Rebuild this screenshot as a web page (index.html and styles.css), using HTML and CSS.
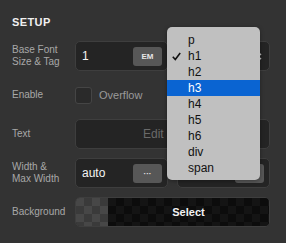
FILE: index.html
```html
<!DOCTYPE html>
<html>
	<head>
		<title>Setup panel</title>
		<link rel="stylesheet" href="styles.css">
	</head>
	<body>
		<div class="panel">
			<div class="title">SETUP</div>
			<div class="row">
				<div class="label">Base Font<br>Size &amp; Tag</div>
				<div class="split">
					<div class="box">
						<span class="val">1</span>
						<span class="btn">EM</span>
					</div>
					<div class="box select">
						<svg class="arrows" width="7" height="11" viewBox="0 0 7 11">
							<path d="M1 4 L3.5 1.5 L6 4 M1 7 L3.5 9.5 L6 7" fill="none" stroke="#bbb" stroke-width="1.4"/>
						</svg>
					</div>
				</div>
			</div>
			<div class="row">
				<div class="label">Enable</div>
				<div class="check-line">
					<span class="check"></span>
					<span class="check-text">Overflow</span>
				</div>
			</div>
			<div class="row">
				<div class="label">Text</div>
				<div class="box wide">
					<span class="edit">Edit</span>
				</div>
			</div>
			<div class="row">
				<div class="label">Width &amp;<br>Max Width</div>
				<div class="split">
					<div class="box">
						<span class="val">auto</span>
						<span class="btn">&middot;&middot;&middot;</span>
					</div>
					<div class="box end">
						<span class="btn">&middot;&middot;&middot;</span>
					</div>
				</div>
			</div>
			<div class="row">
				<div class="label">Background</div>
				<div class="box bg">
					<span class="swatch"></span>
					<span class="pick">Select</span>
				</div>
			</div>
		</div>
		<div class="menu">
			<div class="item">p</div>
			<div class="item">
				<svg class="tick" width="9" height="9" viewBox="0 0 9 9">
					<path d="M0.8 4.8 L3.3 7.6 L8.2 1" fill="none" stroke="#111" stroke-width="1.6"/>
				</svg>h1</div>
			<div class="item">h2</div>
			<div class="item active">h3</div>
			<div class="item">h4</div>
			<div class="item">h5</div>
			<div class="item">h6</div>
			<div class="item">div</div>
			<div class="item">span</div>
		</div>
	</body>
</html>
```

FILE: styles.css
```css
body {
	margin: 0;
	background: #333333;
	font-family: "Liberation Sans", Arial, sans-serif;
	width: 286px;
	height: 243px;
	overflow: hidden;
	position: relative;
}
.panel {
	padding: 15px 16px 0 12px;
}
.title {
	color: #f0f0f0;
	font-size: 11px;
	font-weight: bold;
	letter-spacing: 0.4px;
	line-height: 14px;
	margin-bottom: 12px;
}
.row {
	display: grid;
	grid-template-columns: 63px 1fr;
	align-items: center;
	height: 30px;
	margin-bottom: 9px;
}
.label {
	color: #a8a8a8;
	font-size: 10px;
	line-height: 12px;
}
.split {
	display: grid;
	grid-template-columns: 1fr 1fr;
	gap: 9px;
}
.box {
	box-sizing: border-box;
	height: 30px;
	background: #242424;
	border: 1px solid #3e3e3e;
	border-radius: 5px;
	display: flex;
	align-items: center;
	justify-content: space-between;
	padding: 0 5px 0 6px;
}
.box.end,
.box.select {
	justify-content: flex-end;
}
.val {
	color: #f4f4f4;
	font-size: 12px;
}
.btn {
	width: 29px;
	height: 19px;
	border-radius: 3px;
	background: #575757;
	color: #e6e6e6;
	font-size: 8px;
	font-weight: bold;
	display: flex;
	align-items: center;
	justify-content: center;
}
.select .arrows {
	margin-right: 2px;
}
.check-line {
	display: flex;
	align-items: center;
	gap: 7px;
}
.check {
	box-sizing: border-box;
	width: 17px;
	height: 17px;
	background: #2a2a2a;
	border: 1px solid #454545;
	border-radius: 3px;
}
.check-text {
	color: #9a9a9a;
	font-size: 11px;
}
.wide {
	justify-content: flex-start;
	padding-left: 67px;
}
.edit {
	color: #6a6a6a;
	font-size: 12px;
}
.bg {
	padding: 0;
	overflow: hidden;
	justify-content: flex-start;
}
.swatch {
	width: 32px;
	height: 100%;
	background: repeating-conic-gradient(#3a3a3a 0 25%, #474747 0 50%) 0 0 / 16px 16px;
}
.pick {
	flex: 1;
	height: 100%;
	display: flex;
	align-items: center;
	justify-content: center;
	color: #f2f2f2;
	font-size: 11px;
	font-weight: bold;
	background: repeating-conic-gradient(#0c0c0c 0 25%, #141414 0 50%) 0 0 / 16px 16px;
}
.menu {
	position: absolute;
	left: 167px;
	top: 27px;
	width: 93px;
	box-sizing: border-box;
	padding: 5px 0 4px;
	background: #c0c0c0;
	border-radius: 5px;
	box-shadow: 0 1px 4px rgba(0, 0, 0, 0.35);
}
.item {
	position: relative;
	height: 16px;
	line-height: 16px;
	padding-left: 21px;
	font-size: 12px;
	color: #111;
}
.item.active {
	background: #0a64d2;
	color: #fff;
}
.tick {
	position: absolute;
	left: 5px;
	top: 4px;
}
```
